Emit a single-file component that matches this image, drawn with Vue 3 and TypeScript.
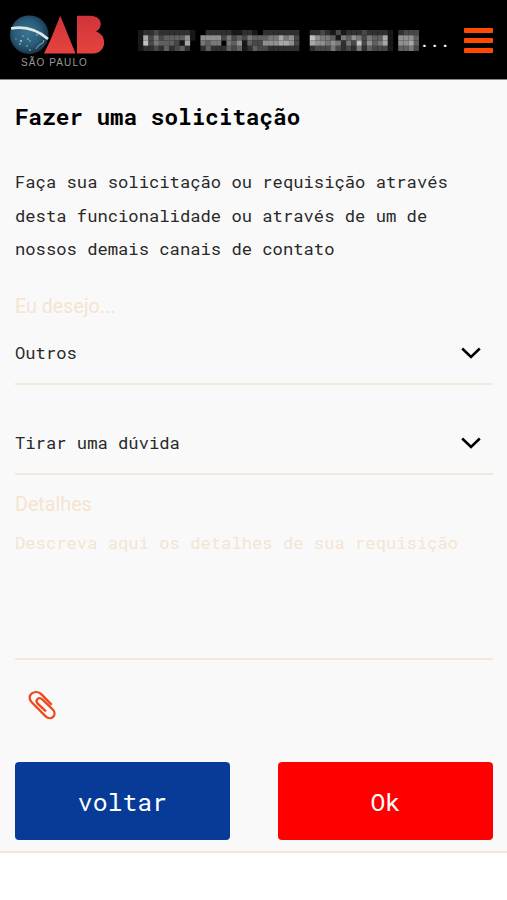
<script setup lang="ts">
import { ref } from 'vue'

interface SelectField { label: string; value: string }

const fields = ref<SelectField[]>([
  { label: 'Eu desejo...', value: 'Outros' },
  { label: '', value: 'Tirar uma dúvida' },
])
const details = ref('')

// Brightness (0-9) of each cell of the masked user name, one string per row and word
const mask: string[] = [
  ['12232222221', '0222221122102222222', '', '2232131222322221', '2333'],
  ['17353444461', '6666353435444557563', '', '8655415465354471', '6664'],
  ['18354443170', '5455054614336667763', '', '7665652538364571', '6674'],
  ['12232423420', '2422243412433222222', '', '2333532325243331', '4453'],
].map((words) => words.join('0'))
const cells = mask.flatMap((row, y) =>
  [...row].map((c, x) => ({ x, y, level: Number(c) })).filter((c) => c.level > 0),
)
const shade = (level: number) => `rgb(${level * 24},${level * 24},${level * 24})`
</script>

<template>
  <div class="page">
    <header class="topbar">
      <svg class="logo" width="98" height="60" viewBox="0 0 98 60">
        <defs>
          <radialGradient id="globe" cx="45%" cy="45%" r="58%">
            <stop offset="0" stop-color="#3b7490" />
            <stop offset="0.6" stop-color="#285b77" />
            <stop offset="1" stop-color="#173044" />
          </radialGradient>
          <linearGradient id="red" x1="0" y1="0" x2="0" y2="1">
            <stop offset="0" stop-color="#d0343a" />
            <stop offset="1" stop-color="#e5433e" />
          </linearGradient>
        </defs>
        <circle cx="21.3" cy="24.7" r="19.3" fill="url(#globe)" />
        <path d="M3 18.5 Q23 14.5 40 29" fill="none" stroke="#dce9e9" stroke-width="2.7" />
        <g fill="#b8d3da">
          <circle cx="15" cy="26" r=".7" /><circle cx="20" cy="29" r=".8" />
          <circle cx="13" cy="31" r="1" /><circle cx="19" cy="36" r=".7" />
          <circle cx="22" cy="31" r=".7" /><circle cx="22" cy="40" r=".8" />
          <circle cx="8" cy="29" r=".6" /><circle cx="29" cy="25" r=".7" />
          <circle cx="12" cy="34" r=".8" />
        </g>
        <path d="M28 39 L31 35 L35 33 L36 30" fill="none" stroke="#a8c5ce" stroke-width=".8" />
        <path d="M52.3 5.7 L67.5 43.5 H36 L42 31 Z" fill="url(#red)" />
        <path d="M69 5.7 H82 C94 5.7 96 17 88 21.5 C100 25 98.5 43.5 85 43.5 H69 Z" fill="url(#red)" />
        <text x="13" y="56" class="logo-text">SÃO PAULO</text>
      </svg>
      <div class="user">
        <svg class="mask" width="281" height="21" viewBox="0 0 54 4" preserveAspectRatio="none">
          <rect v-for="c in cells" :key="`${c.x}-${c.y}`" :x="c.x" :y="c.y" width="1.02" height="1.02" :fill="shade(c.level)" />
        </svg>
        <span class="dots">...</span>
      </div>
      <button class="menu" aria-label="Menu"><i /><i /><i /></button>
    </header>

    <main class="content">
      <h1>Fazer uma solicitação</h1>
      <p class="intro">Faça sua solicitação ou requisição através<br>desta funcionalidade ou através de um de<br>nossos demais canais de contato</p>

      <section v-for="f in fields" :key="f.value" class="field">
        <label class="label">{{ f.label }}</label>
        <div class="select">
          <span>{{ f.value }}</span>
          <svg width="20" height="12" viewBox="0 0 20 12"><path d="M1.2 1.5 L10 10 L18.8 1.5" fill="none" stroke="#000" stroke-width="2.5" /></svg>
        </div>
      </section>

      <section class="details">
        <label class="label">Detalhes</label>
        <textarea v-model="details" placeholder="Descreva aqui os detalhes de sua requisição" />
      </section>

      <svg class="clip" width="28" height="30" viewBox="0 0 28 30">
        <path d="M23.7 14.9 L13.8 4.6 C7.2 -2 -2.5 5.5 3.5 12 L17.7 26.4 C22.8 31.5 29.7 24.7 25 19.7 L14.3 9.4 C10.5 6.3 6.7 10.1 9.7 13.7 L18 21.3" fill="none" stroke="#ed491d" stroke-width="2.3" />
      </svg>

      <div class="actions">
        <button class="back">voltar</button>
        <button class="ok">Ok</button>
      </div>
    </main>
  </div>
</template>

<style>
body { background: #fff; }
</style>

<style scoped>
.page { width: 100%; height: 900px; overflow: hidden; font-family: "Roboto Mono", "DejaVu Sans Mono", monospace; color: #282828; }
.topbar { box-sizing: border-box; height: 80px; display: flex; align-items: flex-start; background: #000; border-bottom: 1px solid #888; padding: 10px 14px 0 8px; }
.logo { flex: none; }
.logo-text { font: 10px "Liberation Sans", sans-serif; letter-spacing: 1.1px; fill: #999; }
.user { display: flex; margin: 20px 0 0 32px; }
.mask { flex: none; }
.dots { color: #fff; font-size: 17.2px; line-height: 21px; width: 31px; }
.menu { margin: 18px 0 0 auto; padding: 0; border: 0; background: none; width: 29px; display: flex; flex-direction: column; gap: 5px; }
.menu i { height: 5px; border-radius: 1px; background: #ff4a05; }
.content { box-sizing: border-box; height: 773px; background: #f9f9f9; border-bottom: 2px solid #f5e6da; padding: 19px 14px 0 15px; }
h1 { margin: 0; font-size: 22.65px; line-height: 34px; color: #000; }
.intro { margin: 32px 0 0; font-size: 17.18px; line-height: 33.7px; white-space: nowrap; }
.label { display: block; font: 19.7px/24px Roboto, sans-serif; color: #f5e4d0; }
.field { box-sizing: border-box; height: 90px; border-bottom: 2px solid #f2e8db; }
.field:first-of-type { margin-top: 29px; }
.field .label { height: 24px; }
.select { display: flex; align-items: center; justify-content: space-between; height: 24px; margin-top: 21px; padding-right: 12px; font-size: 17.18px; }
.select svg { margin-top: 2px; }
.details { margin-top: 18px; height: 165px; border-bottom: 2px solid #f5e6da; }
textarea { display: block; width: 100%; height: 130px; box-sizing: border-box; margin-top: 14px; padding: 0; border: 0; outline: 0; resize: none; background: none; font: inherit; font-size: 17.18px; line-height: 24px; white-space: nowrap; overflow: hidden; }
textarea::placeholder { color: #f5e4d0; opacity: 1; }
.clip { display: block; margin: 30px 0 0 13px; }
.actions { display: grid; grid-template-columns: 215px 215px; justify-content: space-between; margin-top: 42px; }
.actions button { height: 78px; padding: 0; border: 0; border-radius: 4px; color: #fff; font: inherit; font-size: 24.8px; }
.back { background: #083a98; }
.ok { background: #f00; }
</style>
